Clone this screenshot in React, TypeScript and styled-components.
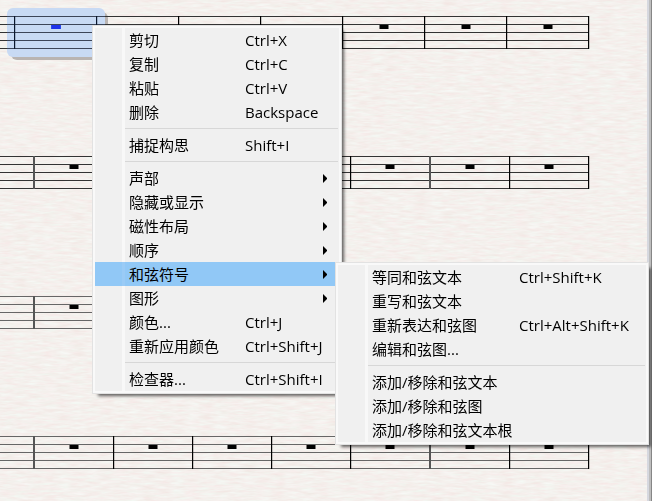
import React from "react";
import styled, { createGlobalStyle, css } from "styled-components";

const GlobalStyle = createGlobalStyle`
  * { box-sizing: border-box; }
  html, body, #root { margin: 0; height: 100%; }
  body {
    overflow: hidden;
    font-family: "Open Sans", "Noto Sans CJK SC", sans-serif;
    font-size: 15px;
    color: #000;
  }
`;

const Workspace = styled.main`
  position: relative;
  display: flex;
  min-height: 100vh;
  background: #f4efed;
`;

const ScoreView = styled.section`
  flex: 1;
  min-width: 0;
  display: flex;
`;

const ScoreDrawing = styled.svg`
  display: block;
  flex: 1;
  min-width: 0;
`;

const SelectionTint = styled.rect`
  mix-blend-mode: screen;
`;

const WindowEdge = styled.div`
  width: 5px;
  border-left: 2px solid #d6d8df;
  border-right: 1px solid #868686;
  background: #bebebe;
`;

const menuPanel = css`
  position: absolute;
  margin: 0;
  list-style: none;
  border: 1px solid #e2e2e2;
  padding: 2px;
  background:
    linear-gradient(#f8f8f8, #f8f8f8) 30px 0 / 3px 100% no-repeat,
    #f0f0f0;
  background-origin: border-box;
  outline: 2px solid #f9f9f9;
  outline-offset: -3px;
  box-shadow: 4px 4px 3px -2px rgba(0, 0, 0, 0.6);
`;

const ContextMenu = styled.ul`
  ${menuPanel}
  left: 92px;
  top: 25px;
  width: 250px;
  --label-width: 116px;
`;

const Submenu = styled.ul`
  ${menuPanel}
  z-index: 1;
  left: calc(100% - 4px);
  top: 0;
  width: 314px;
  --label-width: 147px;
`;

const MenuRow = styled.li`
  position: relative;
`;

const MenuButton = styled.button<{ $active?: boolean }>`
  position: relative;
  display: grid;
  grid-template-columns: 34px var(--label-width) 1fr;
  align-items: center;
  width: 100%;
  height: 24px;
  padding: 0;
  border: 0;
  background: ${(p) =>
    p.$active
      ? "linear-gradient(#9acbf6, #9acbf6) 27px 0 / 3px 100% no-repeat, #91c8f6"
      : "transparent"};
  color: inherit;
  font: inherit;
  line-height: 24px;
  text-align: left;
  white-space: nowrap;
`;

const Label = styled.span`
  grid-column: 2;
`;

const Shortcut = styled.kbd`
  font: inherit;
`;

const Arrow = styled.svg`
  grid-column: 3;
  justify-self: end;
  width: 4px;
  height: 9px;
  margin-right: 12px;
`;

const Separator = styled.li`
  height: 1px;
  margin: 4px 1px 4px 30px;
  background: #d7d7d7;
`;

type Item = {
  label: string;
  shortcut?: string;
  children?: Item[][];
  hasMore?: boolean;
};

const chordItems: Item[][] = [
  [
    { label: "等同和弦文本", shortcut: "Ctrl+Shift+K" },
    { label: "重写和弦文本" },
    { label: "重新表达和弦图", shortcut: "Ctrl+Alt+Shift+K" },
    { label: "编辑和弦图..." },
  ],
  [
    { label: "添加/移除和弦文本" },
    { label: "添加/移除和弦图" },
    { label: "添加/移除和弦文本根" },
  ],
];

const menuItems: Item[][] = [
  [
    { label: "剪切", shortcut: "Ctrl+X" },
    { label: "复制", shortcut: "Ctrl+C" },
    { label: "粘贴", shortcut: "Ctrl+V" },
    { label: "删除", shortcut: "Backspace" },
  ],
  [{ label: "捕捉构思", shortcut: "Shift+I" }],
  [
    { label: "声部", hasMore: true },
    { label: "隐藏或显示", hasMore: true },
    { label: "磁性布局", hasMore: true },
    { label: "顺序", hasMore: true },
    { label: "和弦符号", hasMore: true, children: chordItems },
    { label: "图形", hasMore: true },
    { label: "颜色...", shortcut: "Ctrl+J" },
    { label: "重新应用颜色", shortcut: "Ctrl+Shift+J" },
  ],
  [{ label: "检查器...", shortcut: "Ctrl+Shift+I" }],
];

function MenuGroups({ groups }: { groups: Item[][] }) {
  return (
    <>
      {groups.map((group, g) => (
        <React.Fragment key={g}>
          {g > 0 && <Separator role="separator" />}
          {group.map((item) => (
            <MenuRow key={item.label} role="none">
              <MenuButton
                type="button"
                role="menuitem"
                $active={!!item.children}
                aria-haspopup={item.hasMore ? "menu" : undefined}
                aria-expanded={item.children ? true : undefined}
              >
                <Label>{item.label}</Label>
                {item.shortcut && <Shortcut>{item.shortcut}</Shortcut>}
                {item.hasMore && (
                  <Arrow viewBox="0 0 4 9" aria-hidden="true">
                    <path d="M0 0 L4 4 V5 L0 9Z" />
                  </Arrow>
                )}
              </MenuButton>
              {item.children && (
                <Submenu role="menu" aria-label={item.label}>
                  <MenuGroups groups={item.children} />
                </Submenu>
              )}
            </MenuRow>
          ))}
        </React.Fragment>
      ))}
    </>
  );
}

type Bar = { x: number; soft?: boolean };

const firstBars: Bar[] = [14, 96, 178, 260, 342, 424, 506, 588].map((x) => ({ x }));
const otherBars: Bar[] = [
  { x: 33, soft: true },
  { x: 113 },
  { x: 192 },
  { x: 271 },
  { x: 350 },
  { x: 429, soft: true },
  { x: 509 },
  { x: 588 },
];

const systems = [
  { y: 16, bars: firstBars, line: "#333" },
  { y: 156, bars: otherBars, line: "#333" },
  { y: 296, bars: otherBars, line: "#666" },
  { y: 436, bars: otherBars, line: "#666" },
];

function Rest({ x, y }: { x: number; y: number }) {
  return (
    <g>
      <rect x={x} y={y} width="10" height="4" opacity="0.5" />
      <rect x={x + 1} y={y} width="8" height="4" />
    </g>
  );
}

function Staff({ y, bars, line }: { y: number; bars: Bar[]; line: string }) {
  const end = bars[bars.length - 1].x;
  return (
    <g>
      {[0, 8, 16, 24, 32].map((dy) => (
        <rect key={dy} x="0" y={y + dy} width={end} height="1" fill={line} />
      ))}
      {bars.map(({ x, soft }) =>
        soft ? (
          <rect key={x} x={x} y={y} width="2" height="33" fill="#555" />
        ) : (
          <g key={x}>
            <rect x={x} y={y} width="2" height="33" opacity="0.2" />
            <rect x={x} y={y} width="1" height="33" />
          </g>
        )
      )}
      {bars.slice(0, -1).map(({ x }, i) => (
        <Rest key={x} x={Math.floor((x + bars[i + 1].x) / 2) - 4} y={y + 9} />
      ))}
    </g>
  );
}

export default function App() {
  return (
    <>
      <GlobalStyle />
      <Workspace>
        <ScoreView aria-label="Score">
          <ScoreDrawing role="img" aria-label="Music staves">
            <defs>
              <filter id="paper" x="0" y="0" width="100%" height="100%" colorInterpolationFilters="sRGB">
                <feTurbulence type="fractalNoise" baseFrequency="0.07 0.42" numOctaves="3" seed="8" />
                <feColorMatrix
                  values="0.04 0 0 0 0.938
                          0.02 0.09 0 0 0.886
                          0.04 0.08 0 0 0.868
                          0 0 0 0 1"
                />
              </filter>
            </defs>
            <rect width="100%" height="100%" filter="url(#paper)" />
            <rect x="11" y="12" width="97" height="48" rx="6" fill="#b9b4b2" />
            <rect x="7" y="8" width="98" height="49" rx="6" fill="#c6d6f1" />
            {systems.map((s) => (
              <Staff key={s.y} {...s} />
            ))}
            <SelectionTint x="7" y="8" width="98" height="49" rx="6" fill="#2d60bd" opacity="0.24" />
            <rect x="51" y="25" width="10" height="4" fill="#2a48ec" />
            <rect x="52" y="25" width="8" height="4" fill="#1e32ea" />
          </ScoreDrawing>
        </ScoreView>
        <WindowEdge />
        <ContextMenu role="menu" aria-label="Edit">
          <MenuGroups groups={menuItems} />
        </ContextMenu>
      </Workspace>
    </>
  );
}
